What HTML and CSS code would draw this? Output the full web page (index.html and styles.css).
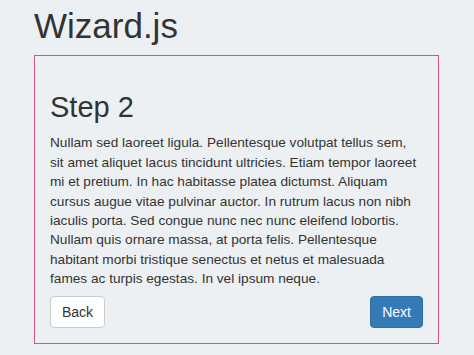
FILE: index.html
```html
<!DOCTYPE html>
<html>
<head>
<meta charset="utf-8">
<link rel="stylesheet" href="styles.css">
</head>
<body>
<div class="page">
  <h1 class="title">Wizard.js</h1>
  <div class="wizard">
    <h2 class="step-title">Step 2</h2>
    <p class="step-text">Nullam sed laoreet ligula. Pellentesque volutpat tellus sem, sit amet aliquet lacus tincidunt ultricies. Etiam tempor laoreet mi et pretium. In hac habitasse platea dictumst. Aliquam cursus augue vitae pulvinar auctor. In rutrum lacus non nibh iaculis porta. Sed congue nunc nec nunc eleifend lobortis. Nullam quis ornare massa, at porta felis. Pellentesque habitant morbi tristique senectus et netus et malesuada fames ac turpis egestas. In vel ipsum neque.</p>
    <div class="actions">
      <button class="btn btn-default">Back</button>
      <button class="btn btn-primary">Next</button>
    </div>
  </div>
</div>
</body>
</html>
```
FILE: styles.css
```css
html, body {
  margin: 0;
  padding: 0;
  background: #edf0f2;
}
body {
  font-family: "Liberation Sans", Arial, sans-serif;
  color: #333;
  font-size: 13.65px;
}
.page {
  padding: 7px 0 0 34px;
  width: 405px;
}
.title {
  margin: 0 0 9px 0;
  font-size: 35px;
  font-weight: 500;
  line-height: 1.1;
  color: #333;
}
.wizard {
  border: 1px solid #d9557f;
  padding: 15px;
}
.step-title {
  margin: 21px 0 10px 0;
  font-size: 29px;
  font-weight: 500;
  line-height: 1.1;
}
.step-text {
  margin: 0 0 7px 0;
  line-height: 19.4px;
}
.actions {
  display: flex;
  justify-content: space-between;
}
.btn {
  font-family: "Liberation Sans", Arial, sans-serif;
  font-size: 14px;
  line-height: 20px;
  padding: 5px 11px;
  border-radius: 4px;
  border: 1px solid transparent;
  cursor: pointer;
}
.btn-default {
  background: #fff;
  color: #333;
  border-color: #ccc;
}
.btn-primary {
  background: #337ab7;
  color: #fff;
  border-color: #2e6da4;
}
```
